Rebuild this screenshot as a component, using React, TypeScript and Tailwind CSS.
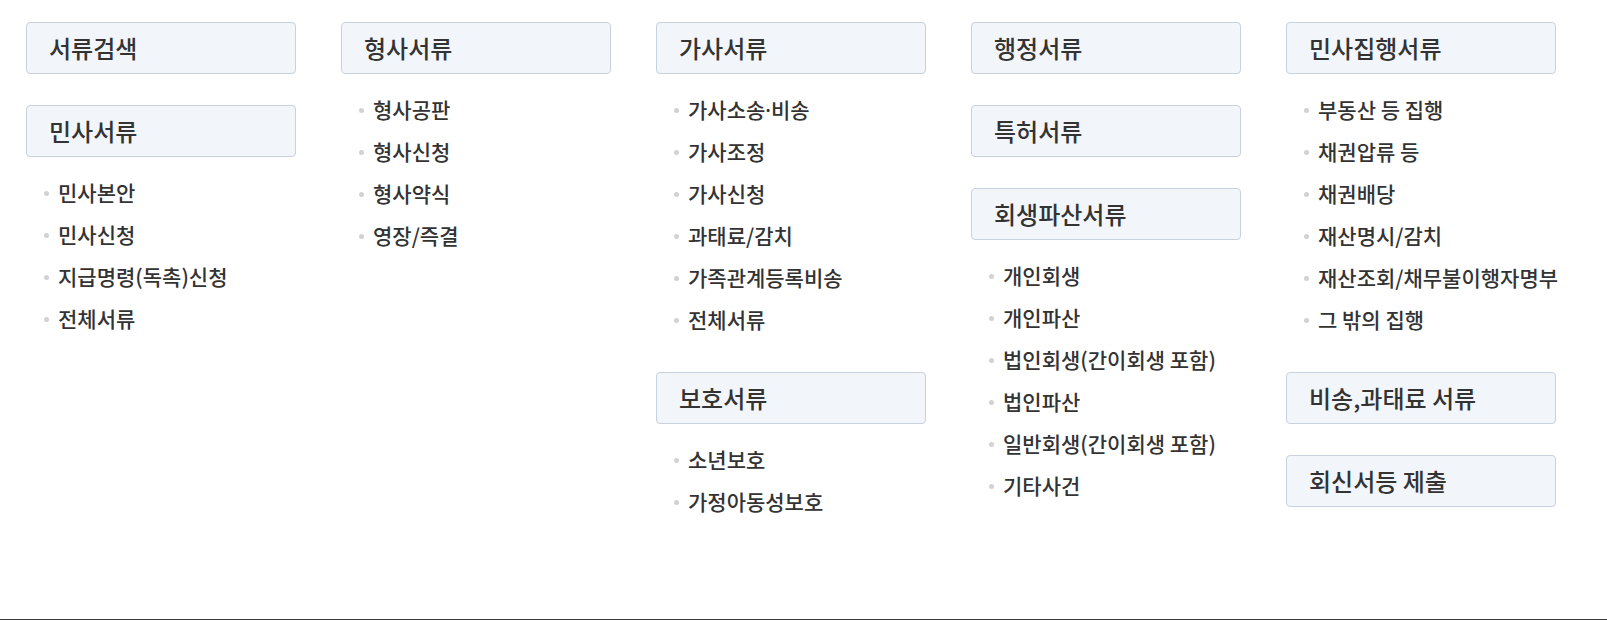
import React from 'react';

interface Group {
    title: string;
    items?: string[];
}

const columns: Group[][] = [
    [
        { title: '서류검색' },
        { title: '민사서류', items: ['민사본안', '민사신청', '지급명령(독촉)신청', '전체서류'] },
    ],
    [{ title: '형사서류', items: ['형사공판', '형사신청', '형사약식', '영장/즉결'] }],
    [
        {
            title: '가사서류',
            items: ['가사소송·비송', '가사조정', '가사신청', '과태료/감치', '가족관계등록비송', '전체서류'],
        },
        { title: '보호서류', items: ['소년보호', '가정아동성보호'] },
    ],
    [
        { title: '행정서류' },
        { title: '특허서류' },
        {
            title: '회생파산서류',
            items: ['개인회생', '개인파산', '법인회생(간이회생 포함)', '법인파산', '일반회생(간이회생 포함)', '기타사건'],
        },
    ],
    [
        {
            title: '민사집행서류',
            items: ['부동산 등 집행', '채권압류 등', '채권배당', '재산명시/감치', '재산조회/채무불이행자명부', '그 밖의 집행'],
        },
        { title: '비송,과태료 서류' },
        { title: '회신서등 제출' },
    ],
];

// the middle dot is drawn half-width in the original, so give it a latin font
function ItemLabel({ text }: { text: string }) {
    const parts = text.split('·');
    return (
        <span>
            {parts.map((p, i) => (
                <React.Fragment key={i}>
                    {i > 0 && <span className="font-['Noto_Sans']">·</span>}
                    {p}
                </React.Fragment>
            ))}
        </span>
    );
}

function MenuGroup({ group }: { group: Group }) {
    return (
        <div className="flex flex-col">
            <div className="h-[52px] flex items-center pl-[22px] bg-[#f2f6fa] border border-[#c9d1dc] rounded-[4px] text-[24px] font-medium text-[#333]">
                {group.title}
            </div>
            {group.items && (
                <ul className="pt-[15px] pl-[18px]">
                    {group.items.map((item) => (
                        <li key={item} className="h-[42px] flex items-center gap-[9px] text-[21px] font-medium text-[#333] whitespace-nowrap">
                            <span className="w-[5px] h-[5px] rounded-full bg-[#d2d2d2] shrink-0" />
                            <ItemLabel text={item} />
                        </li>
                    ))}
                </ul>
            )}
        </div>
    );
}

export default function App() {
    return (
        <div
            className="h-[620px] bg-white border-b border-[#3a3a3a] pt-[22px] pl-[26px]"
            style={{ fontFamily: '"Noto Sans CJK KR", "Noto Sans", sans-serif' }}
        >
            <div className="flex gap-[45px] items-start">
                {columns.map((col, i) => (
                    <div key={i} className="w-[270px] flex flex-col gap-[31px]">
                        {col.map((g) => (
                            <MenuGroup key={g.title} group={g} />
                        ))}
                    </div>
                ))}
            </div>
        </div>
    );
}
